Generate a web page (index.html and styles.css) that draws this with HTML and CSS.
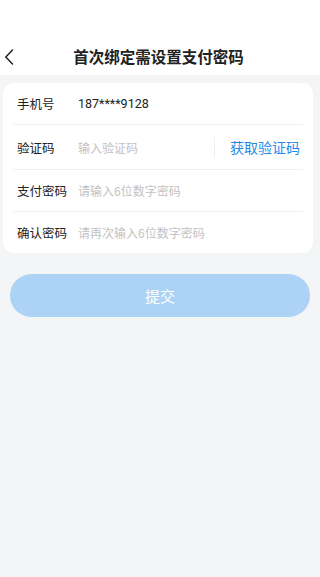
FILE: index.html
```html
<!DOCTYPE html>
<html lang="zh">
<head>
<meta charset="utf-8">
<link rel="stylesheet" href="styles.css">
</head>
<body>
<div class="page">
  <header class="header">
    <span class="back">
      <svg width="10" height="16" viewBox="0 0 10 16"><path d="M8.5 1 L1.8 8 L8.5 15" fill="none" stroke="#222" stroke-width="1.5" stroke-linecap="round" stroke-linejoin="round"/></svg>
    </span>
    <h1 class="title">首次绑定需设置支付密码</h1>
  </header>
  <main class="content">
    <div class="card">
      <div class="row row-first">
        <span class="label">手机号</span>
        <span class="value">187****9128</span>
      </div>
      <div class="row row-code">
        <span class="label">验证码</span>
        <span class="placeholder">输入验证码</span>
        <span class="vline"></span>
        <span class="getcode">获取验证码</span>
      </div>
      <div class="row">
        <span class="label">支付密码</span>
        <span class="placeholder">请输入6位数字密码</span>
      </div>
      <div class="row row-last">
        <span class="label">确认密码</span>
        <span class="placeholder">请再次输入6位数字密码</span>
      </div>
    </div>
    <button class="submit">提交</button>
  </main>
</div>
</body>
</html>
```
FILE: styles.css
```css
* { box-sizing: border-box; }
html, body { margin: 0; padding: 0; }
body {
  width: 320px;
  height: 577px;
  background: #f4f5f7;
  font-family: "Noto Sans CJK SC", "Noto Sans", sans-serif;
  color: #222;
  overflow: hidden;
}
.page { display: flex; flex-direction: column; }
.header {
  background: #fff;
  height: 75px;
  display: flex;
  align-items: flex-end;
  justify-content: center;
  position: relative;
  padding-bottom: 8px;
}
.back {
  position: absolute;
  left: 4px;
  top: 49px;
  width: 10px;
  height: 16px;
  display: block;
}
.back svg { display: block; }
.title {
  margin: 0;
  font-size: 15.5px;
  font-weight: 700;
  line-height: 22px;
  color: #222;
  margin-left: -3px;
}
.content {
  padding: 8px 7px 0 3px;
  display: flex;
  flex-direction: column;
}
.card {
  background: #fff;
  border-radius: 11px;
  padding: 0 10px;
}
.row {
  height: 42px;
  display: flex;
  align-items: center;
  padding-left: 4px;
  border-bottom: 1px solid #f1f1f3;
  font-size: 12.5px;
}
.row-first { height: 42px; }
.row-code { height: 45px; }
.row-last { border-bottom: none; height: 41px; }
.label {
  width: 61px;
  flex: none;
  color: #222;
}
.value {
  color: #222;
  font-family: "Roboto", "Noto Sans", sans-serif;
  font-size: 12.5px;
}
.placeholder {
  color: #c2c2c4;
  font-size: 12px;
  flex: 1;
}
.vline {
  width: 1px;
  height: 21px;
  background: #f0f0f2;
  margin-right: 15px;
}
.getcode {
  color: #1f8ce8;
  font-size: 14px;
  margin-right: 3px;
}
.submit {
  margin: 21px 3px 0 7px;
  height: 43px;
  border: none;
  border-radius: 22px;
  background: #acd3f5;
  color: #fff;
  font-family: "Noto Sans CJK SC", "Noto Sans", sans-serif;
  font-size: 15px;
  padding: 0;
}
```
